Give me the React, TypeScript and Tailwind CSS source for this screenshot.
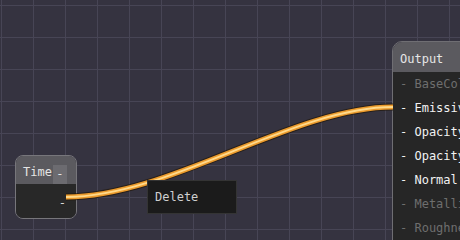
const mono = { fontFamily: '"DejaVu Sans Mono", "Liberation Mono", monospace' };

const inputs = [
  { name: "BaseColor", on: false },
  { name: "Emissive", on: true },
  { name: "Opacity", on: true },
  { name: "OpacityClip", on: true },
  { name: "Normal", on: true },
  { name: "Metallic", on: false },
  { name: "Roughness", on: false },
];

function Wire() {
  const d = "M 66 197 C 170 197, 293 107, 393 107";
  return (
    <svg className="absolute inset-0 pointer-events-none" width={460} height={240}>
      <path d={d} fill="none" stroke="#231a0e" strokeWidth={7} strokeOpacity={0.75} />
      <path d={d} fill="none" stroke="#eb9a2c" strokeWidth={5} />
      <path d={d} fill="none" stroke="#ffd98a" strokeWidth={1.8} />
    </svg>
  );
}

function TimeNode() {
  return (
    <div className="absolute left-[15px] top-[155px] w-[62px] rounded-[8px] border border-[#77767b] overflow-hidden text-[12px] leading-none" style={mono}>
      <div className="h-[28px] bg-[#5b5a5f] flex items-center pl-[7px] pr-[9px] gap-[1px]">
        <span className="text-[#e4e4e4] pt-[4px]">Time</span>
        <span className="w-[16px] h-[19px] mt-[8px] bg-[#6c6b70] text-[#e4e4e4] flex items-center justify-center">-</span>
      </div>
      <div className="h-[34px] bg-[#282828] flex items-center justify-end pr-[10px] pt-[4px] text-[#d8d8d8]">-</div>
    </div>
  );
}

function OutputNode() {
  return (
    <div className="absolute left-[392px] top-[41px] w-[120px] h-[230px] rounded-tl-[10px] border border-[#6f6e73] overflow-hidden text-[12px] leading-none" style={mono}>
      <div className="h-[30px] bg-[#5b5a5f] flex items-center pl-[7px] pt-[3px] text-[#e6e6e6]">Output</div>
      <div className="bg-[#262626] h-full flex flex-col">
        {inputs.map((i) => (
          <div
            key={i.name}
            className={`h-[24px] flex items-center pl-[7px] whitespace-pre ${i.on ? "text-[#f2f2f2]" : "text-[#6e6e6e]"}`}
          >
            {"- " + i.name}
          </div>
        ))}
      </div>
    </div>
  );
}

function ContextMenu() {
  return (
    <div className="absolute left-[147px] top-[180px] w-[90px] h-[34px] bg-[#1b1b1b] border border-[#343434] flex items-center pl-[7px] text-[12px] text-[#cfcfcf]" style={mono}>
      Delete
    </div>
  );
}

export default function App() {
  return (
    <div className="relative w-[460px] h-[240px] overflow-hidden bg-[#353340] bg-[linear-gradient(to_right,#474555_1px,transparent_1px),linear-gradient(to_bottom,#474555_1px,transparent_1px)] bg-[size:32px_32px] bg-[position:1px_5px]">
      <TimeNode />
      <OutputNode />
      <Wire />
      <ContextMenu />
    </div>
  );
}
